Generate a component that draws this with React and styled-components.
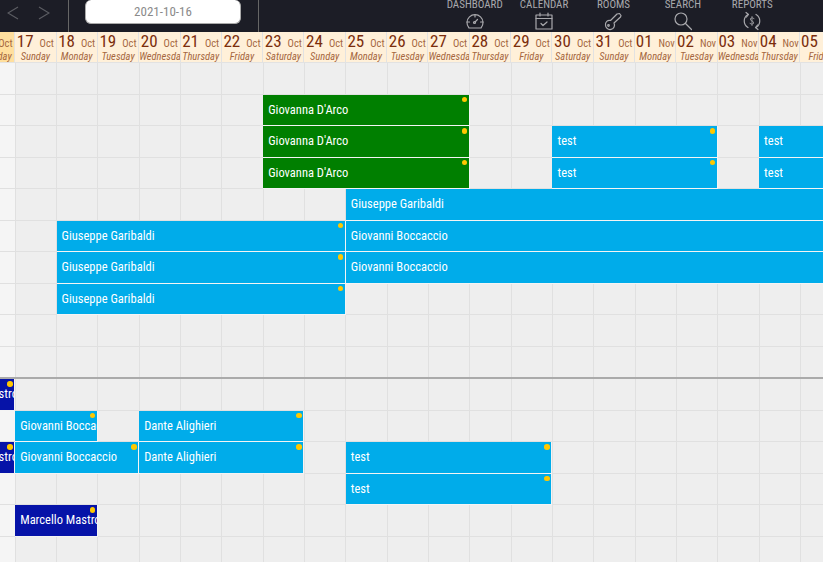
import React from "react";
import styled, { createGlobalStyle } from "styled-components";

const COL = 41.34;
const ROW = 31.5;

const GlobalStyle = createGlobalStyle`
  html, body {
    margin: 0;
    height: 100%;
    overflow: hidden;
    background: #fff;
    font-family: Roboto, "Liberation Sans", sans-serif;
    font-stretch: 87%;
  }
`;

const Page = styled.div`
  width: 823px;
  height: 562px;
  overflow: hidden;
`;

const TopBar = styled.header`
  height: 32px;
  background: #1c1d26;
  display: flex;
`;

const Arrows = styled.div`
  width: 69px;
  box-sizing: border-box;
  border-right: 1px solid #666;
  display: flex;
  align-items: flex-start;
  gap: 19px;
  padding: 5px 0 0 7px;
  svg {
    display: block;
  }
`;

const DateBox = styled.div`
  width: 190px;
  box-sizing: border-box;
  border-right: 1px solid #666;
  padding-left: 16px;
`;

const DateField = styled.div`
  width: 156px;
  height: 24px;
  box-sizing: border-box;
  background: #fff;
  border: 1px solid #aaa;
  border-top: 0;
  border-radius: 6px;
  color: #8a8a8a;
  font-size: 13px;
  line-height: 24px;
  text-align: center;
`;

const Nav = styled.nav`
  display: flex;
  margin-left: 181px;
`;

const NavItem = styled.div`
  width: 69.4px;
  display: flex;
  flex-direction: column;
  align-items: center;
  color: #a9a9ad;
  font-size: 11px;
  line-height: 10px;
  text-transform: uppercase;
  white-space: nowrap;
  svg {
    display: block;
    margin-top: 1px;
  }
`;

const Timeline = styled.div`
  margin-left: ${15.2 - 2 * COL}px;
  width: ${COL * 24}px;
`;

const DayHeader = styled.div`
  height: 31px;
  display: grid;
  grid-template-columns: repeat(24, ${COL}px);
`;

const Day = styled.div`
  box-sizing: border-box;
  height: 31px;
  overflow: hidden;
  background: ${(p) => (p.$selected ? "#ffdf9e" : "#fff0d9")};
  border-right: 1px solid #e2e2e2;
  border-bottom: 1px solid #e2e2e2;
  text-align: center;
`;

const DayTop = styled.div`
  height: 19px;
  display: flex;
  justify-content: center;
  align-items: baseline;
  gap: 6px;
  white-space: nowrap;
`;

const DayNum = styled.span`
  color: #7b2d0c;
  font-size: 17px;
  line-height: 19px;
`;

const DayMonth = styled.span`
  color: #a5673f;
  font-size: 10.5px;
`;

const Weekday = styled.div`
  color: #a5673f;
  font-size: 10.5px;
  line-height: 12px;
  font-style: italic;
  white-space: nowrap;
`;

const Section = styled.section`
  display: flex;
  flex-direction: column;
`;

const Divider = styled.div`
  height: 2px;
  background: #aaa;
  margin-top: -1px;
`;

const Row = styled.div`
  height: ${ROW}px;
  box-sizing: border-box;
  display: grid;
  grid-template-columns: repeat(24, ${COL}px);
  grid-template-rows: 1fr;
  background-color: #eee;
  background-image:
    repeating-linear-gradient(
      to right,
      transparent 0,
      transparent ${COL - 1}px,
      #e0e0e0 ${COL - 1}px,
      #e0e0e0 ${COL}px
    ),
    linear-gradient(to right, transparent ${COL}px, #f5f5f5 ${COL}px, #f5f5f5 ${2 * COL - 1}px, transparent ${2 * COL - 1}px);
  border-bottom: 1px solid #e0e0e0;
`;

const Event = styled.div`
  grid-column: ${(p) => p.$start + 3} / span ${(p) => p.$span};
  grid-row: 1;
  position: relative;
  min-width: 0;
  overflow: hidden;
  padding-left: 5px;
  background: ${(p) => p.$color};
  border-right: 1px solid #f4f4f4;
  margin-bottom: -1px;
  border-bottom: 1px solid #f4f4f4;
  color: #fff;
  font-size: 12.5px;
  line-height: 29px;
  white-space: nowrap;
`;

const Dot = styled.span`
  position: absolute;
  top: 2px;
  right: 1.5px;
  width: 5.5px;
  height: 5.5px;
  border-radius: 50%;
  background: #ffc800;
`;

const BLUE = "#00acea";
const GREEN = "#007f00";
const NAVY = "#0613a8";

const months = [
  ["15", "Oct", "Friday"],
  ["16", "Oct", "Saturday"],
  ["17", "Oct", "Sunday"],
  ["18", "Oct", "Monday"],
  ["19", "Oct", "Tuesday"],
  ["20", "Oct", "Wednesday"],
  ["21", "Oct", "Thursday"],
  ["22", "Oct", "Friday"],
  ["23", "Oct", "Saturday"],
  ["24", "Oct", "Sunday"],
  ["25", "Oct", "Monday"],
  ["26", "Oct", "Tuesday"],
  ["27", "Oct", "Wednesday"],
  ["28", "Oct", "Thursday"],
  ["29", "Oct", "Friday"],
  ["30", "Oct", "Saturday"],
  ["31", "Oct", "Sunday"],
  ["01", "Nov", "Monday"],
  ["02", "Nov", "Tuesday"],
  ["03", "Nov", "Wednesday"],
  ["04", "Nov", "Thursday"],
  ["05", "Nov", "Friday"],
  ["06", "Nov", "Saturday"],
  ["07", "Nov", "Sunday"],
];

const garibaldi = "Giuseppe Garibaldi";
const boccaccio = "Giovanni Boccaccio";
const dante = "Dante Alighieri";
const marcello = "Marcello Mastroianni";
const giovanna = "Giovanna D'Arco";

// start is the column index counted from 17 Oct
const upperRows = [
  [],
  [{ t: giovanna, s: 6, n: 5, c: GREEN, dot: true }],
  [
    { t: giovanna, s: 6, n: 5, c: GREEN, dot: true },
    { t: "test", s: 13, n: 4, c: BLUE, dot: true },
    { t: "test", s: 18, n: 4, c: BLUE },
  ],
  [
    { t: giovanna, s: 6, n: 5, c: GREEN, dot: true },
    { t: "test", s: 13, n: 4, c: BLUE, dot: true },
    { t: "test", s: 18, n: 4, c: BLUE },
  ],
  [{ t: garibaldi, s: 8, n: 14, c: BLUE }],
  [
    { t: garibaldi, s: 1, n: 7, c: BLUE, dot: true },
    { t: boccaccio, s: 8, n: 14, c: BLUE },
  ],
  [
    { t: garibaldi, s: 1, n: 7, c: BLUE, dot: true },
    { t: boccaccio, s: 8, n: 14, c: BLUE },
  ],
  [{ t: garibaldi, s: 1, n: 7, c: BLUE, dot: true }],
  [],
  [],
];

const lowerRows = [
  [{ t: marcello, s: -2, n: 2, c: NAVY, dot: true }],
  [
    { t: boccaccio, s: 0, n: 2, c: BLUE, dot: true },
    { t: dante, s: 3, n: 4, c: BLUE, dot: true },
  ],
  [
    { t: marcello, s: -2, n: 2, c: NAVY, dot: true },
    { t: boccaccio, s: 0, n: 3, c: BLUE, dot: true },
    { t: dante, s: 3, n: 4, c: BLUE, dot: true },
    { t: "test", s: 8, n: 5, c: BLUE, dot: true },
  ],
  [{ t: "test", s: 8, n: 5, c: BLUE, dot: true }],
  [{ t: marcello, s: 0, n: 2, c: NAVY, dot: true }],
  [],
];

function NavIcon({ children }) {
  return (
    <svg
      width="20"
      height="20"
      viewBox="0 0 20 20"
      fill="none"
      stroke="#a9a9ad"
      strokeWidth="1.2"
      strokeLinecap="round"
      strokeLinejoin="round"
    >
      {children}
    </svg>
  );
}

function BookingRows({ rows }) {
  return rows.map((row, i) => (
    <Row key={i}>
      {row.map((ev) => (
        <Event key={ev.s} $start={ev.s} $span={ev.n} $color={ev.c}>
          {ev.t}
          {ev.dot && <Dot />}
        </Event>
      ))}
    </Row>
  ));
}

export default function App() {
  return (
    <Page>
      <GlobalStyle />
      <TopBar>
        <Arrows>
          <svg width="12" height="16" viewBox="0 0 12 16" fill="none" stroke="#5c5d63" strokeWidth="1.2">
            <path d="M11 2 L1 8 L11 14" />
          </svg>
          <svg width="12" height="16" viewBox="0 0 12 16" fill="none" stroke="#5c5d63" strokeWidth="1.2">
            <path d="M1 2 L11 8 L1 14" />
          </svg>
        </Arrows>
        <DateBox>
          <DateField>2021-10-16</DateField>
        </DateBox>
        <Nav>
          <NavItem>
            Dashboard
            <NavIcon>
              <path d="M4 17 A8 8 0 1 1 16 17 Z" />
              <path d="M2 11 h2.5 M15.5 11 h2.5 M10 4 v2 M10 11 l2.5 -2.5" />
              <circle cx="9.5" cy="11.5" r="1" />
            </NavIcon>
          </NavItem>
          <NavItem>
            Calendar
            <NavIcon>
              <rect x="2" y="4" width="16" height="14" />
              <path d="M2 7.5 h16 M6 2 v3 M14 2 v3 M7 12.5 l2 2 l4 -3.5" />
            </NavIcon>
          </NavItem>
          <NavItem>
            Rooms
            <NavIcon>
              <path d="M2.5 14 a4 4 0 0 1 5 -4.5 L14 3 l2.5 -0.5 L18 4.5 L17.5 6 L11 12 a4.5 4.5 0 1 1 -8.5 2 Z" />
              <circle cx="5.5" cy="14.5" r="0.8" />
            </NavIcon>
          </NavItem>
          <NavItem>
            Search
            <NavIcon>
              <circle cx="8" cy="8" r="6" />
              <path d="M12.5 12.5 L18.5 18.5" />
            </NavIcon>
          </NavItem>
          <NavItem>
            Reports
            <NavIcon>
              <path d="M6 3.5 A7.5 7.5 0 0 0 6 16.5 M14 3.5 A7.5 7.5 0 0 1 14 16.5" />
              <path d="M4 1.5 L6.5 3.5 L4.5 6 M16 18.5 L13.5 16.5 L15.5 14" />
              <path d="M12 7.5 Q10 6 8.5 7.5 Q8 9.5 10 10 Q12 10.5 11.5 12.5 Q10 14 8 12.5 M10 5.5 v9" strokeWidth="0.8" />
            </NavIcon>
          </NavItem>
        </Nav>
      </TopBar>
      <Timeline>
        <DayHeader>
          {months.map(([num, month, weekday], i) => (
            <Day key={i} $selected={num === "16"}>
              <DayTop>
                <DayNum>{num}</DayNum>
                <DayMonth>{month}</DayMonth>
              </DayTop>
              <Weekday>{weekday}</Weekday>
            </Day>
          ))}
        </DayHeader>
        <Section>
          <BookingRows rows={upperRows} />
          <Divider />
          <BookingRows rows={lowerRows} />
        </Section>
      </Timeline>
    </Page>
  );
}
